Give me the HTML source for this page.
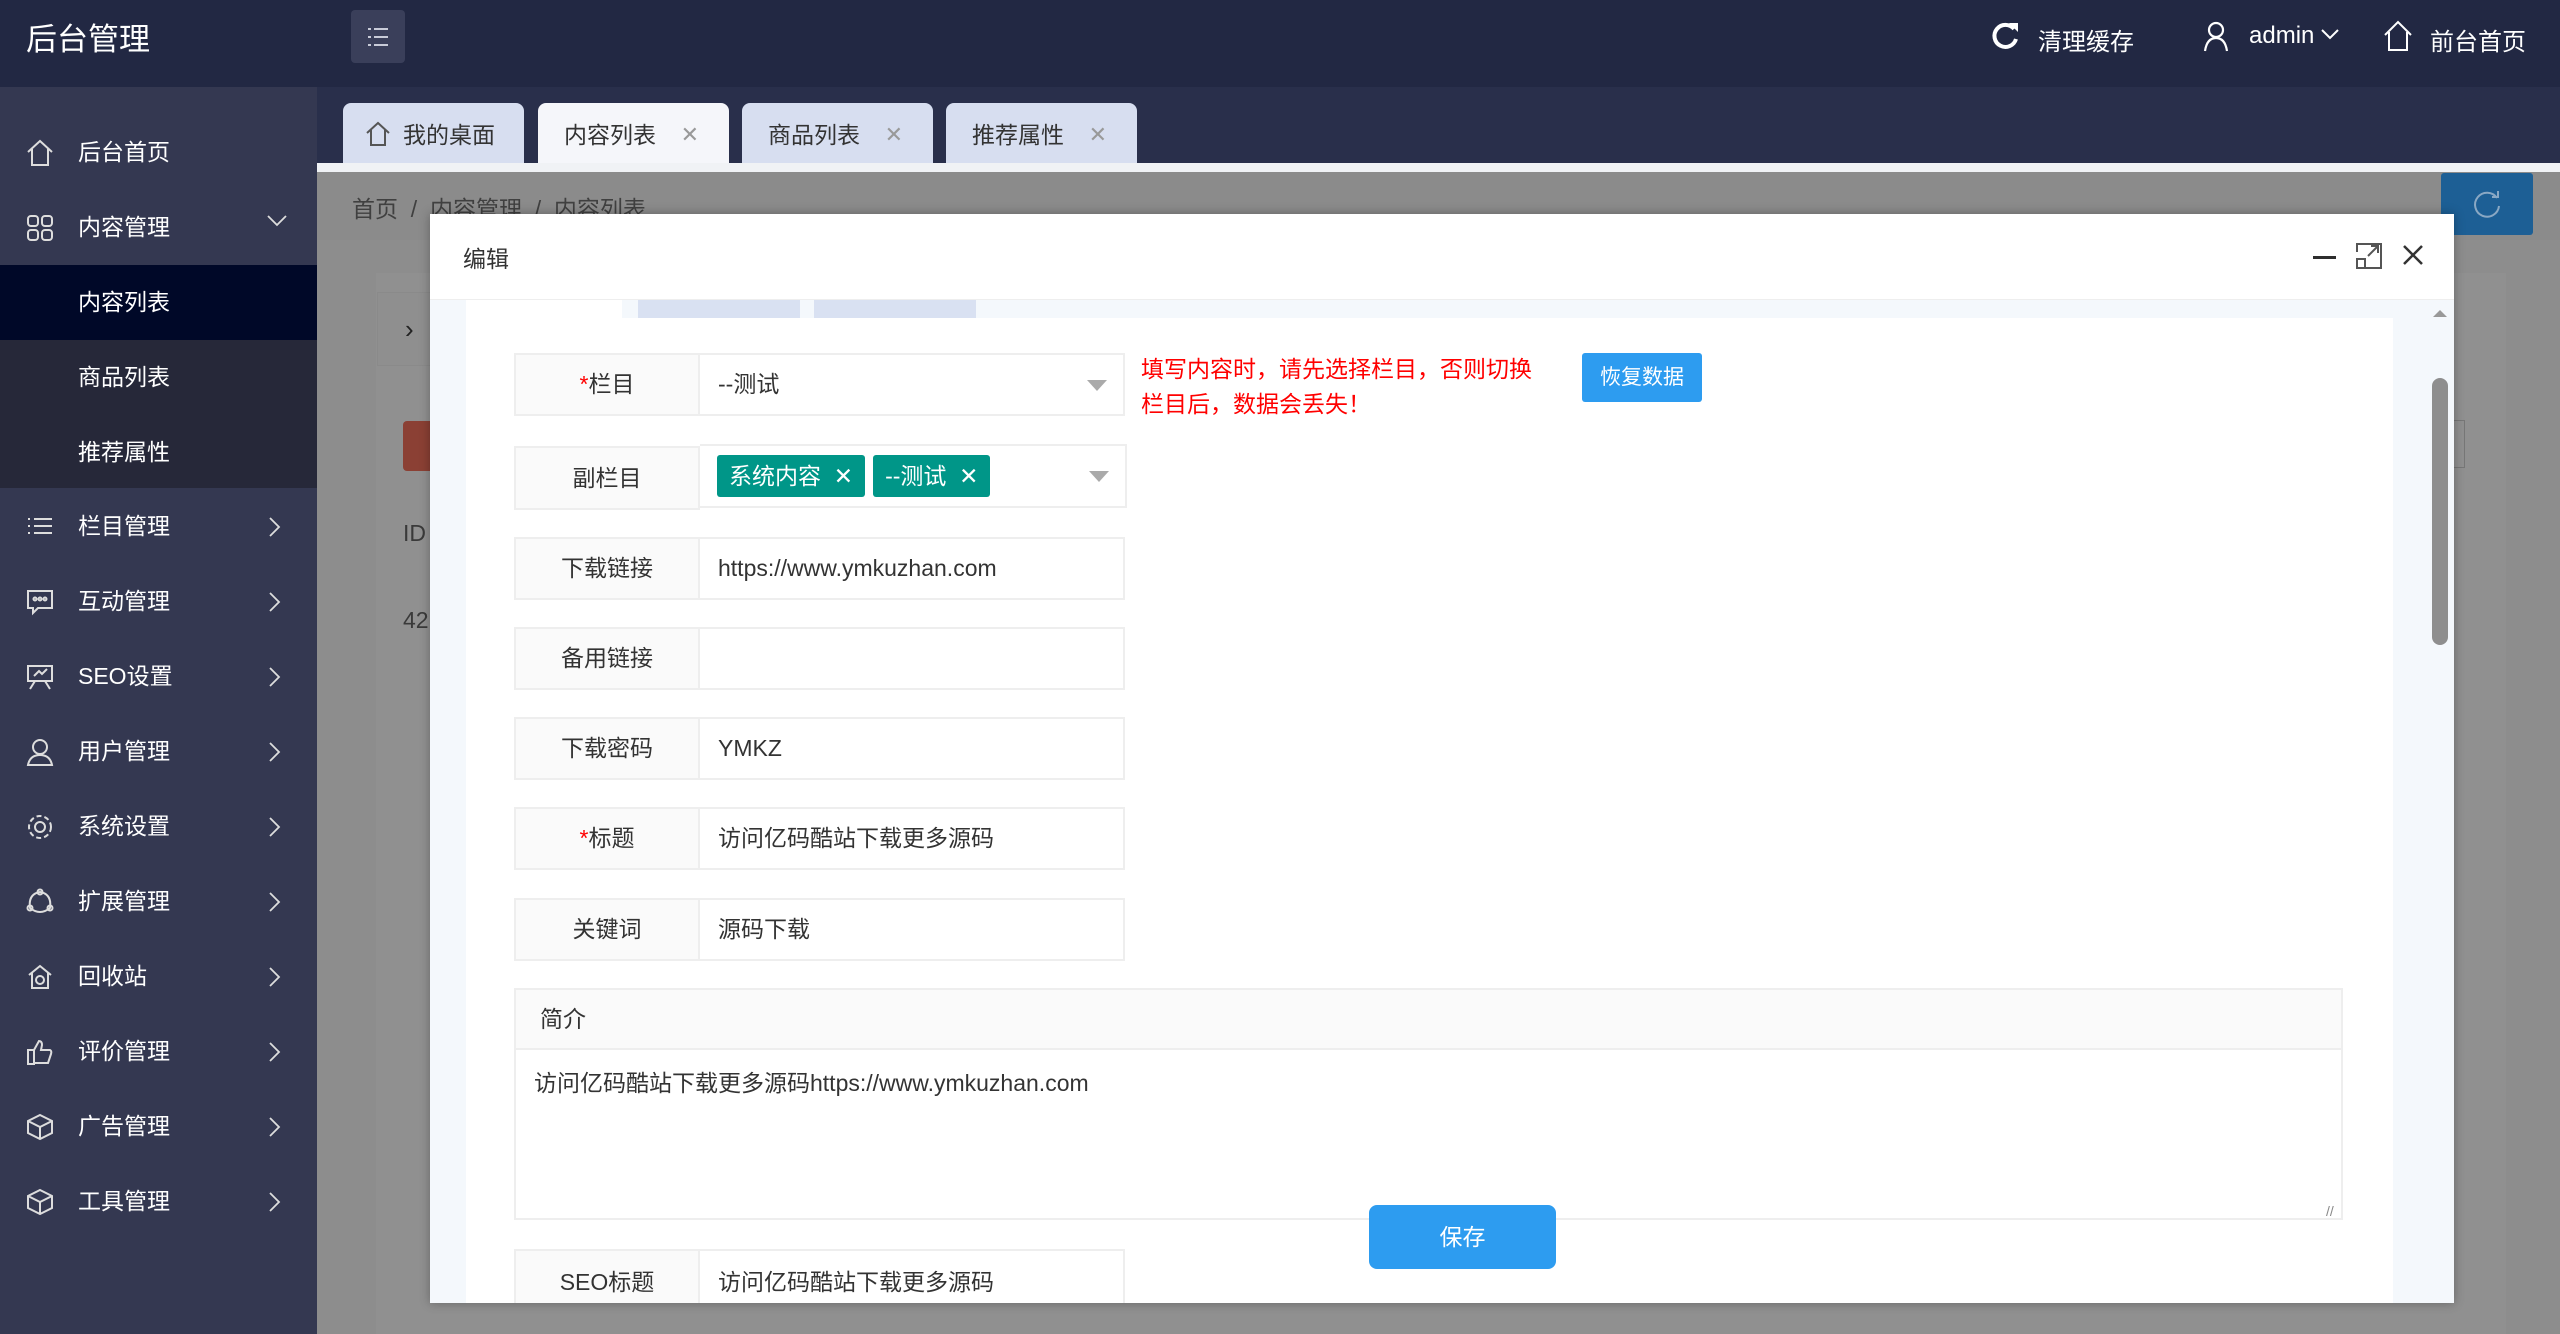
<!DOCTYPE html>
<html><head><meta charset="utf-8">
<style>
*{box-sizing:border-box;margin:0;padding:0}
body{width:2560px;height:1334px;overflow:hidden;position:relative;font-family:"Liberation Sans","Noto Sans CJK SC",sans-serif;background:#8d8d8d}
.a{position:absolute}
.hdr{left:0;top:0;width:2560px;height:87px;background:#222843}
.side{left:0;top:87px;width:317px;height:1247px;background:#343851}
.si{position:absolute;left:0;width:317px;height:75px;color:#fff;font-size:23px;line-height:75px;padding-left:78px}
.si svg{position:absolute;left:26px;top:24px}
.si svg.ch{left:268px;top:27px}
.tabbar{left:317px;top:87px;width:2243px;height:76px;background:#292f4b}
.tab{position:absolute;top:103px;height:64px;background:#d7def0;border-radius:8px 8px 0 0;font-size:23px;color:#333;line-height:64px;padding-left:26px}
.tab .x{position:absolute;right:30px;top:0;color:#999;font-size:22px}
.lbl{position:absolute;left:514px;width:186px;background:#fafafa;border:2px solid #eee;text-align:center;font-size:23px;color:#333}
.inp{position:absolute;left:700px;width:425px;background:#fff;border:2px solid #eee;border-left:none;font-size:23px;color:#333;padding-left:18px}
.req{color:#f00}
.tag{display:inline-block;background:#009688;color:#fff;height:42px;line-height:42px;padding:0 12px;border-radius:3px;font-size:23px;margin-right:8px}
.arr{position:absolute;right:16px;top:50%;margin-top:-5px;width:0;height:0;border-left:10px solid transparent;border-right:10px solid transparent;border-top:11px solid #aaa}
</style></head><body>
<div class="a hdr"></div>
<div class="a" style="left:26px;top:14px;color:#fff;font-size:31px">后台管理</div>
<div class="a" style="left:351px;top:10px;width:54px;height:53px;background:#3a3f5a;border-radius:4px">
<svg width="54" height="53"><g stroke="#c8cbd8" stroke-width="2"><line x1="17" y1="19" x2="20" y2="19"/><line x1="23" y1="19" x2="37" y2="19"/><line x1="17" y1="27" x2="20" y2="27"/><line x1="23" y1="27" x2="37" y2="27"/><line x1="17" y1="35" x2="20" y2="35"/><line x1="23" y1="35" x2="37" y2="35"/></g></svg></div>
<svg class="a" style="left:1990px;top:20px" width="30" height="32"><path d="M24 9 A11 11 0 1 0 26 19" fill="none" stroke="#fff" stroke-width="4"/><path d="M19 3 L28 3 L28 12 Z" fill="#fff"/></svg>
<div class="a" style="left:2038px;top:22px;color:#fff;font-size:24px">清理缓存</div>
<svg class="a" style="left:2202px;top:20px" width="28" height="32"><circle cx="14" cy="10" r="7" fill="none" stroke="#fff" stroke-width="2.2"/><path d="M3 31 Q5 18 14 18 Q23 18 25 31" fill="none" stroke="#fff" stroke-width="2.2"/></svg>
<div class="a" style="left:2249px;top:22px;color:#fff;font-size:24px">admin</div>
<svg class="a" style="left:2320px;top:28px" width="20" height="14"><path d="M2 2 L10 10 L18 2" fill="none" stroke="#fff" stroke-width="2"/></svg>
<svg class="a" style="left:2382px;top:20px" width="32" height="32"><path d="M3 15 L16 2 L29 15 M7 12 L7 30 L25 30 L25 12" fill="none" stroke="#fff" stroke-width="2"/></svg>
<div class="a" style="left:2430px;top:22px;color:#fff;font-size:24px">前台首页</div>

<div class="a side"></div>
<div class="si" style="top:115px"><svg width="28" height="28"><path d="M2 13 L14 2 L26 13 M6 10 L6 26 L22 26 L22 10" fill="none" stroke="#ddd" stroke-width="2"/></svg>后台首页</div>
<div class="si" style="top:190px"><svg width="28" height="28" fill="none" stroke="#ddd" stroke-width="2"><rect x="2" y="2" width="10" height="10" rx="3"/><rect x="16" y="2" width="10" height="10" rx="3"/><rect x="2" y="16" width="10" height="10" rx="3"/><rect x="16" y="16" width="10" height="10" rx="3"/></svg>内容管理<svg class="ch" width="22" height="14" style="top:24px;left:266px"><path d="M2 2L11 11L20 2" fill="none" stroke="#ddd" stroke-width="1.8"/></svg></div>
<div class="si" style="top:265px;background:#000828">内容列表</div>
<div class="si" style="top:340px;background:#262839">商品列表</div>
<div class="si" style="top:415px;background:#262839;height:73px">推荐属性</div>
<div class="si" style="top:489px"><svg width="28" height="28" stroke="#ddd" stroke-width="2"><path d="M2 6h2M8 6h18M2 13h2M8 13h18M2 20h2M8 20h18"/></svg>栏目管理<svg class="ch" width="14" height="22"><path d="M2 2L11 11L2 20" fill="none" stroke="#ddd" stroke-width="1.8"/></svg></div>
<div class="si" style="top:564px"><svg width="28" height="28" fill="none" stroke="#ddd" stroke-width="2"><path d="M2 3h24v17H12l-5 5v-5H2z"/><circle cx="9" cy="11" r="1.5"/><circle cx="14" cy="11" r="1.5"/><circle cx="19" cy="11" r="1.5"/></svg>互动管理<svg class="ch" width="14" height="22"><path d="M2 2L11 11L2 20" fill="none" stroke="#ddd" stroke-width="1.8"/></svg></div>
<div class="si" style="top:639px"><svg width="28" height="28" fill="none" stroke="#ddd" stroke-width="2"><path d="M2 3h24v15H2zM9 18l-5 8M19 18l5 8M8 13l5-5 3 3 5-5"/></svg>SEO设置<svg class="ch" width="14" height="22"><path d="M2 2L11 11L2 20" fill="none" stroke="#ddd" stroke-width="1.8"/></svg></div>
<div class="si" style="top:714px"><svg width="28" height="28" fill="none" stroke="#ddd" stroke-width="2"><circle cx="14" cy="9" r="7"/><path d="M2 27q2-10 12-10t12 10z"/></svg>用户管理<svg class="ch" width="14" height="22"><path d="M2 2L11 11L2 20" fill="none" stroke="#ddd" stroke-width="1.8"/></svg></div>
<div class="si" style="top:789px"><svg width="28" height="28" fill="none" stroke="#ddd" stroke-width="2"><circle cx="14" cy="14" r="5"/><circle cx="14" cy="14" r="11" stroke-dasharray="5 3"/></svg>系统设置<svg class="ch" width="14" height="22"><path d="M2 2L11 11L2 20" fill="none" stroke="#ddd" stroke-width="1.8"/></svg></div>
<div class="si" style="top:864px"><svg width="28" height="28" fill="none" stroke="#ddd" stroke-width="2"><path d="M4 20 Q2 6 14 4 Q26 6 24 20 Q14 28 4 20z"/><circle cx="4" cy="20" r="2.5"/><circle cx="24" cy="20" r="2.5"/><circle cx="14" cy="4" r="2.5"/></svg>扩展管理<svg class="ch" width="14" height="22"><path d="M2 2L11 11L2 20" fill="none" stroke="#ddd" stroke-width="1.8"/></svg></div>
<div class="si" style="top:939px"><svg width="28" height="28" fill="none" stroke="#ddd" stroke-width="2"><path d="M3 12 L14 3 L25 12 M6 10 L6 25 L22 25 L22 10"/><circle cx="14" cy="17" r="4"/></svg>回收站<svg class="ch" width="14" height="22"><path d="M2 2L11 11L2 20" fill="none" stroke="#ddd" stroke-width="1.8"/></svg></div>
<div class="si" style="top:1014px"><svg width="28" height="28" fill="none" stroke="#ddd" stroke-width="2"><path d="M2 12h6v14H2zM8 12l5-9q3 0 3 4l-1 5h9q2 1 1 4l-3 9H8"/></svg>评价管理<svg class="ch" width="14" height="22"><path d="M2 2L11 11L2 20" fill="none" stroke="#ddd" stroke-width="1.8"/></svg></div>
<div class="si" style="top:1089px"><svg width="28" height="28" fill="none" stroke="#ddd" stroke-width="2"><path d="M14 2l12 6v12l-12 6-12-6V8zM2 8l12 6 12-6M14 14v12"/></svg>广告管理<svg class="ch" width="14" height="22"><path d="M2 2L11 11L2 20" fill="none" stroke="#ddd" stroke-width="1.8"/></svg></div>
<div class="si" style="top:1164px"><svg width="28" height="28" fill="none" stroke="#ddd" stroke-width="2"><path d="M14 2l12 6v12l-12 6-12-6V8zM2 8l12 6 12-6M14 14v12"/></svg>工具管理<svg class="ch" width="14" height="22"><path d="M2 2L11 11L2 20" fill="none" stroke="#ddd" stroke-width="1.8"/></svg></div>

<div class="a tabbar"></div>
<div class="tab" style="left:343px;width:181px;padding-left:60px"><svg class="a" style="left:22px;top:18px" width="26" height="26"><path d="M2 12 L13 2 L24 12 M6 9 L6 24 L20 24 L20 9" fill="none" stroke="#555" stroke-width="2"/></svg>我的桌面</div>
<div class="tab" style="left:538px;width:191px;background:#f5f6fa">内容列表<span class="x">✕</span></div>
<div class="tab" style="left:742px;width:191px">商品列表<span class="x">✕</span></div>
<div class="tab" style="left:946px;width:191px">推荐属性<span class="x">✕</span></div>
<div class="a" style="left:317px;top:163px;width:2243px;height:9px;background:#f0f2f5"></div>

<div class="a" style="left:317px;top:172px;width:2243px;height:68px;background:#8b8b8b"></div>
<div class="a" style="left:352px;top:190px;color:#404040;font-size:23px">首页 &nbsp;/&nbsp; 内容管理 &nbsp;/&nbsp; 内容列表</div>
<div class="a" style="left:2441px;top:173px;width:92px;height:62px;background:#1d5f95;border-radius:3px"></div>
<svg class="a" style="left:2470px;top:188px" width="34" height="34"><path d="M27 10 A12 12 0 1 0 29 18" fill="none" stroke="#8aa8c4" stroke-width="2"/><path d="M22 9h6V3" fill="none" stroke="#8aa8c4" stroke-width="2"/></svg>
<div class="a" style="left:376px;top:273px;width:2130px;height:1061px;background:#909090"></div>
<div class="a" style="left:377px;top:292px;width:80px;height:74px;border:1px solid #8a8a8a;background:#8f8f8f;color:#222;font-size:26px;line-height:72px;padding-left:27px">›</div>
<div class="a" style="left:403px;top:421px;width:40px;height:50px;background:#8b4034;border-radius:4px"></div>
<div class="a" style="left:403px;top:520px;color:#3a3a3a;font-size:23px">ID</div>
<div class="a" style="left:403px;top:607px;color:#3a3a3a;font-size:23px">42</div>
<div class="a" style="left:2440px;top:420px;width:25px;height:48px;border:1px solid #777"></div>

<div class="a" style="left:430px;top:214px;width:2024px;height:1089px;background:#f4f8fc;box-shadow:0 0 10px rgba(0,0,0,.3)"></div>
<div class="a" style="left:430px;top:214px;width:2024px;height:86px;background:#fff;border-bottom:1px solid #eee"></div>
<div class="a" style="left:463px;top:240px;color:#333;font-size:23px">编辑</div>
<div class="a" style="left:2313px;top:256px;width:23px;height:3px;background:#2e2e2e"></div>
<svg class="a" style="left:2356px;top:243px" width="26" height="26" fill="none" stroke="#555" stroke-width="2"><path d="M1 9V1h24v24H9M1 16h8v9H1zM12 13l10-10M15 3h7v7"/></svg>
<svg class="a" style="left:2402px;top:244px" width="22" height="22" stroke="#333" stroke-width="2.5"><path d="M2 2L20 20M20 2L2 20"/></svg>
<div class="a" style="left:466px;top:300px;width:156px;height:20px;background:#fff"></div>
<div class="a" style="left:638px;top:300px;width:162px;height:18px;background:#d9e1f2"></div>
<div class="a" style="left:814px;top:300px;width:162px;height:18px;background:#d9e1f2"></div>
<div class="a" style="left:466px;top:318px;width:1927px;height:985px;background:#fff"></div>
<div class="a" style="left:2432px;top:378px;width:16px;height:267px;background:#8e8e8e;border-radius:8px"></div>
<div class="a" style="left:2433px;top:310px;width:0;height:0;border-left:7px solid transparent;border-right:7px solid transparent;border-bottom:7px solid #999"></div>

<div class="lbl" style="top:353px;height:63px;line-height:59px"><span class="req">*</span>栏目</div>
<div class="inp" style="top:353px;height:63px;line-height:59px">--测试<span class="arr"></span></div>
<div class="a" style="left:1141px;top:352px;color:#f00;font-size:23px;line-height:35px">填写内容时，请先选择栏目，否则切换<br>栏目后，数据会丢失！</div>
<div class="a" style="left:1582px;top:353px;width:120px;height:49px;background:#2d9cf0;color:#fff;border-radius:3px;font-size:21px;text-align:center;line-height:49px">恢复数据</div>

<div class="lbl" style="top:446px;height:64px;line-height:60px">副栏目</div>
<div class="inp" style="top:444px;height:64px;width:427px;padding-left:17px;padding-top:9px"><span class="tag">系统内容 &nbsp;✕</span><span class="tag">--测试 &nbsp;✕</span><span class="arr"></span></div>

<div class="lbl" style="top:537px;height:63px;line-height:59px">下载链接</div>
<div class="inp" style="top:537px;height:63px;line-height:59px">https://www.ymkuzhan.com</div>
<div class="lbl" style="top:627px;height:63px;line-height:59px">备用链接</div>
<div class="inp" style="top:627px;height:63px;line-height:59px"></div>
<div class="lbl" style="top:717px;height:63px;line-height:59px">下载密码</div>
<div class="inp" style="top:717px;height:63px;line-height:59px">YMKZ</div>
<div class="lbl" style="top:807px;height:63px;line-height:59px"><span class="req">*</span>标题</div>
<div class="inp" style="top:807px;height:63px;line-height:59px">访问亿码酷站下载更多源码</div>
<div class="lbl" style="top:898px;height:63px;line-height:59px">关键词</div>
<div class="inp" style="top:898px;height:63px;line-height:59px">源码下载</div>

<div class="a" style="left:514px;top:988px;width:1829px;height:232px;border:2px solid #eee;background:#fff"></div>
<div class="a" style="left:516px;top:990px;width:1825px;height:60px;background:#fafafa;border-bottom:2px solid #eee;font-size:23px;color:#333;line-height:58px;padding-left:24px">简介</div>
<div class="a" style="left:534px;top:1064px;font-size:23px;color:#333">访问亿码酷站下载更多源码https://www.ymkuzhan.com</div>
<div class="a" style="left:2326px;top:1203px;color:#888;font-size:14px">//</div>

<div class="a" style="left:1369px;top:1205px;width:187px;height:64px;background:#2d9cf0;color:#fff;border-radius:8px;font-size:23px;text-align:center;line-height:64px">保存</div>

<div class="lbl" style="top:1249px;height:54px;line-height:62px;border-bottom:none">SEO标题</div>
<div class="inp" style="top:1249px;height:54px;line-height:62px;border-bottom:none">访问亿码酷站下载更多源码</div>
</body></html>
